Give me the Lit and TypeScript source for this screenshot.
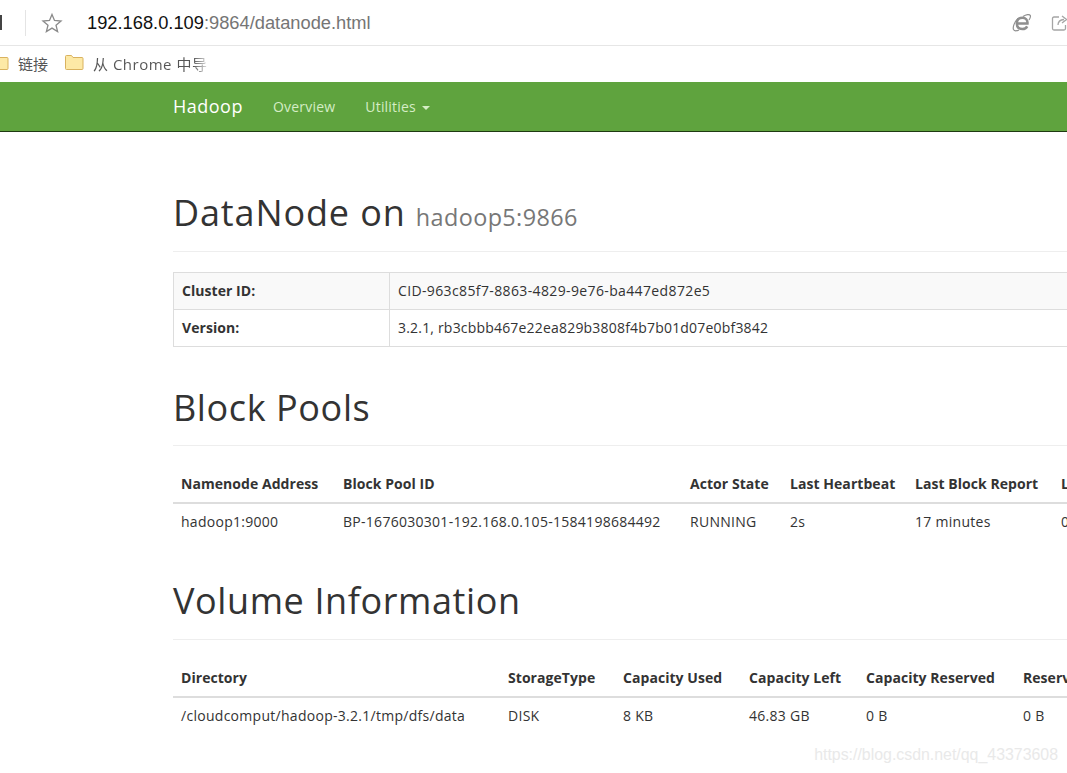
import { LitElement, css, html } from 'lit';
import { customElement } from 'lit/decorators.js';

const blockCols = [162, 347, 100, 125, 146, 220];
const volumeCols = [327, 115, 126, 117, 157, 258];

const folder = html`<svg class="folder" viewBox="0 0 20 17" width="20" height="17">
  <path d="M1.5 14.5V2.5q0-1 1-1h5l1.500 2h9q1 0 1 1v10q0 1-1 1h-15.500q-1 0-1-1z" fill="#fde9a6" stroke="#d9b25f" stroke-width="1"/>
</svg>`;

@customElement('app-root')
export class AppRoot extends LitElement {
  static styles = css`
    :host {
      display: block;
      width: 1067px;
      height: 773px;
      overflow: hidden;
      position: relative;
      background: #fff;
      color: #333;
      font-family: 'Open Sans', 'Noto Sans CJK SC', sans-serif;
      font-size: 14px;
      line-height: 20px;
    }
    .toolbar {
      height: 45px;
      border-bottom: 1px solid #e6e6e6;
      display: flex;
      align-items: center;
    }
    .edge {
      width: 2px;
      height: 15px;
      background: #444;
    }
    .sep {
      width: 1px;
      height: 26px;
      background: #e4e4e4;
      margin-left: 23px;
    }
    .star {
      margin-left: 15px;
    }
    .url {
      margin-left: 24px;
      font-size: 18.300px;
      color: #757575;
      font-family: 'Liberation Sans', sans-serif;
    }
    .url b {
      font-weight: 400;
      color: #111;
    }
    .tools {
      margin-left: auto;
      display: flex;
      align-items: center;
      gap: 19px;
      margin-right: -2px;
    }
    .bookmarks {
      height: 36px;
      display: flex;
      align-items: center;
      font-size: 15px;
      color: #555;
    }
    .folder {
      flex: none;
      margin-top: -3px;
    }
    .cut {
      display: flex;
      margin-left: -11px;
    }
    .mark {
      margin-left: 9px;
      margin-right: 16px;
    }
    .mark.fade {
      letter-spacing: 0.5px;
      background: linear-gradient(90deg, #555 88%, #ddd);
      -webkit-background-clip: text;
      background-clip: text;
      color: transparent;
    }
    .navbar {
      height: 49px;
      background: #5fa33e;
      border-bottom: 1px solid #1f3a12;
      display: flex;
      align-items: center;
      padding-left: 173px;
      color: #d5edc5;
      letter-spacing: 0.2px;
    }
    .brand {
      font-size: 18px;
      color: #fff;
      margin-right: 30px;
      letter-spacing: 0.5px;
      margin-top: -2px;
    }
    .nav {
      margin-right: 30px;
    }
    .caret {
      display: inline-block;
      border-top: 4px solid #d5edc5;
      border-left: 4px solid transparent;
      border-right: 4px solid transparent;
      margin-left: 2px;
      vertical-align: middle;
    }
    .container {
      width: 1100px;
      margin-left: 173px;
    }
    .page-header {
      margin: 40px 0 20px;
      padding-bottom: 9px;
      border-bottom: 1px solid #eee;
    }
    .page-header.first {
      margin-top: 60px;
    }
    h1 {
      margin: 0 0 9px;
      padding-top: 1px;
      font-size: 36px;
      font-weight: 400;
      line-height: 39.6px;
      letter-spacing: 0.6px;
    }
    .first h1 {
      letter-spacing: 0.87px;
    }
    small {
      font-size: 23.400px;
      line-height: 1;
      color: #777;
      letter-spacing: 0.4px;
    }
    table {
      border-collapse: collapse;
      table-layout: fixed;
      width: 1100px;
    }
    th,
    td {
      padding: 8px;
      text-align: left;
      white-space: nowrap;
      overflow: hidden;
    }
    th {
      letter-spacing: 0.05px;
    }
    td {
      letter-spacing: 0.28px;
    }
    td.wide {
      letter-spacing: 0.37px;
    }
    td.tight {
      letter-spacing: 0.19px;
    }
    .info th,
    .info td {
      border: 1px solid #ddd;
    }
    .info tr:first-child > * {
      background: #f9f9f9;
    }
    .data thead th {
      border-bottom: 2px solid #ddd;
    }
    .watermark {
      position: absolute;
      right: 9px;
      top: 745px;
      font-family: 'Liberation Sans', sans-serif;
      font-size: 15.900px;
      color: #e9e9e9;
    }
  `;

  colgroup(cols: number[]) {
    return html`<colgroup>${cols.map((w) => html`<col style="width:${w}px" />`)}</colgroup>`;
  }

  render() {
    return html`
      <div class="toolbar">
        <div class="edge"></div>
        <div class="sep"></div>
        <svg class="star" width="22" height="22" viewBox="0 0 22 22">
          <path d="M11 2.500l2.500 6 6.500.5-5 4.200 1.600 6.300-5.600-3.400-5.600 3.400 1.600-6.300-5-4.200 6.500-.5z" fill="none" stroke="#8a8a8a" stroke-width="1.300"/>
        </svg>
        <div class="url"><b>192.168.0.109</b>:9864/datanode.html</div>
        <div class="tools">
          <svg width="20" height="20" viewBox="0 0 20 20" fill="none" stroke="#8f8f8f">
            <path d="M5.500 10.500H15.500C15.800 6.800 13.500 4.800 10.500 4.800C7 4.800 4.800 7 4.800 10.500C4.800 14 7 16 10.500 16C12.800 16 14.300 15 15.200 13.300" stroke-width="2.500"/>
            <path d="M6 5.500C2.500 9 0.500 14 1.500 16.500C2.500 18.500 5 18 7 17M11 3.500C14 1.500 17.500 0.800 18.300 2.500C18.800 3.800 18 5.500 17 7" stroke-width="1.200"/>
          </svg>
          <svg width="18" height="18" viewBox="0 0 18 18">
            <path d="M8 3H3q-1.500 0-1.500 1.500v10q0 1.500 1.500 1.500h10q1.500 0 1.500-1.500V11M7 11q0-5 6-5.500M11 2l4.500 3.500-4.500 3.500" fill="none" stroke="#a5a5a5" stroke-width="1.300"/>
          </svg>
        </div>
      </div>
      <div class="bookmarks">
        <span class="cut">${folder}</span>
        <span class="mark">链接</span>
        ${folder}
        <span class="mark fade">从 Chrome 中导</span>
      </div>
      <div class="navbar">
        <span class="brand">Hadoop</span>
        <span class="nav">Overview</span>
        <span class="nav">Utilities <i class="caret"></i></span>
      </div>
      <div class="container">
        <div class="page-header first"><h1>DataNode on <small>hadoop5:9866</small></h1></div>
        <table class="info">
          ${this.colgroup([216, 884])}
          <tr><th>Cluster ID:</th><td class="wide">CID-963c85f7-8863-4829-9e76-ba447ed872e5</td></tr>
          <tr><th>Version:</th><td class="tight">3.2.1, rb3cbbb467e22ea829b3808f4b7b01d07e0bf3842</td></tr>
        </table>
        <div class="page-header"><h1>Block Pools</h1></div>
        <table class="data">
          ${this.colgroup(blockCols)}
          <thead>
            <tr>
              <th>Namenode Address</th><th>Block Pool ID</th><th>Actor State</th>
              <th>Last Heartbeat</th><th>Last Block Report</th><th>Last Block Size</th>
            </tr>
          </thead>
          <tbody>
            <tr>
              <td>hadoop1:9000</td><td>BP-1676030301-192.168.0.105-1584198684492</td><td>RUNNING</td>
              <td>2s</td><td>17 minutes</td><td>0 B</td>
            </tr>
          </tbody>
        </table>
        <div class="page-header"><h1>Volume Information</h1></div>
        <table class="data">
          ${this.colgroup(volumeCols)}
          <thead>
            <tr>
              <th>Directory</th><th>StorageType</th><th>Capacity Used</th>
              <th>Capacity Left</th><th>Capacity Reserved</th><th>Reserved Space for Replicas</th>
            </tr>
          </thead>
          <tbody>
            <tr>
              <td>/cloudcomput/hadoop-3.2.1/tmp/dfs/data</td><td>DISK</td><td>8 KB</td>
              <td>46.83 GB</td><td>0 B</td><td>0 B</td>
            </tr>
          </tbody>
        </table>
      </div>
      <div class="watermark">https://blog.csdn.net/qq_43373608</div>
    `;
  }
}
